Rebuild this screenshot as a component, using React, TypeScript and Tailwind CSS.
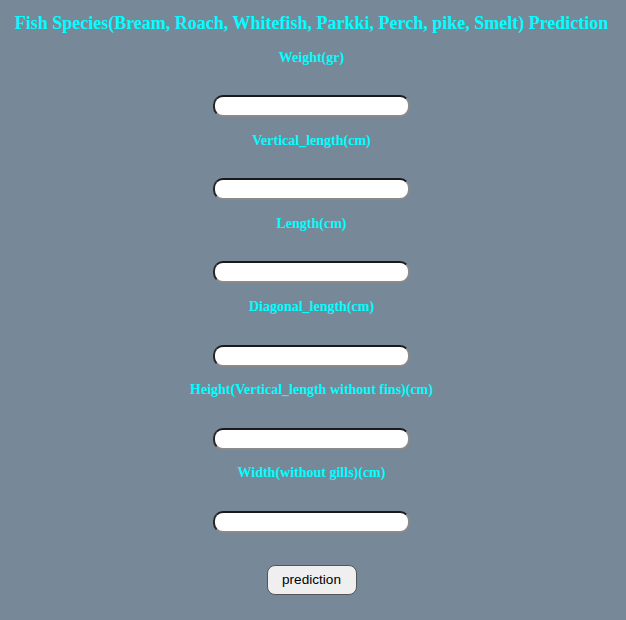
import React from "react";

const labels = [
  "Weight(gr)",
  "Vertical_length(cm)",
  "Length(cm)",
  "Diagonal_length(cm)",
  "Height(Vertical_length without fins)(cm)",
  "Width(without gills)(cm)",
];

export default function App() {
  return (
    <div
      className="min-h-[620px] w-full bg-[#778899] flex flex-col items-center pr-[3px]"
      style={{ fontFamily: '"Liberation Serif", "Times New Roman", serif' }}
    >
      <h3 className="mt-[13px] text-[18px] leading-[20.7px] font-bold text-[#00ffff] text-center">
        Fish Species(Bream, Roach, Whitefish, Parkki, Perch, pike, Smelt) Prediction
      </h3>
      <div className="flex flex-col items-center mt-[15.8px]">
        {labels.map((l) => (
          <div key={l} className="flex flex-col items-center">
            <h5 className="text-[14px] leading-[16px] font-bold text-[#00ffff] text-center">
              {l}
            </h5>
            <input
              type="text"
              className="mt-[29.6px] mb-[15.6px] w-[197px] h-[22px] bg-white rounded-[10px] border-2 border-t-[#1a1a1a] border-l-[#262626] border-b-[#8a8a8a] border-r-[#8a8a8a] outline-none"
            />
          </div>
        ))}
      </div>
      <button
        className="mt-[16.5px] w-[90px] h-[30px] rounded-[8px] bg-[#efefef] border border-[#555] text-[13.6px] text-black"
        style={{ fontFamily: '"Liberation Sans", Arial, sans-serif' }}
      >
        prediction
      </button>
    </div>
  );
}
